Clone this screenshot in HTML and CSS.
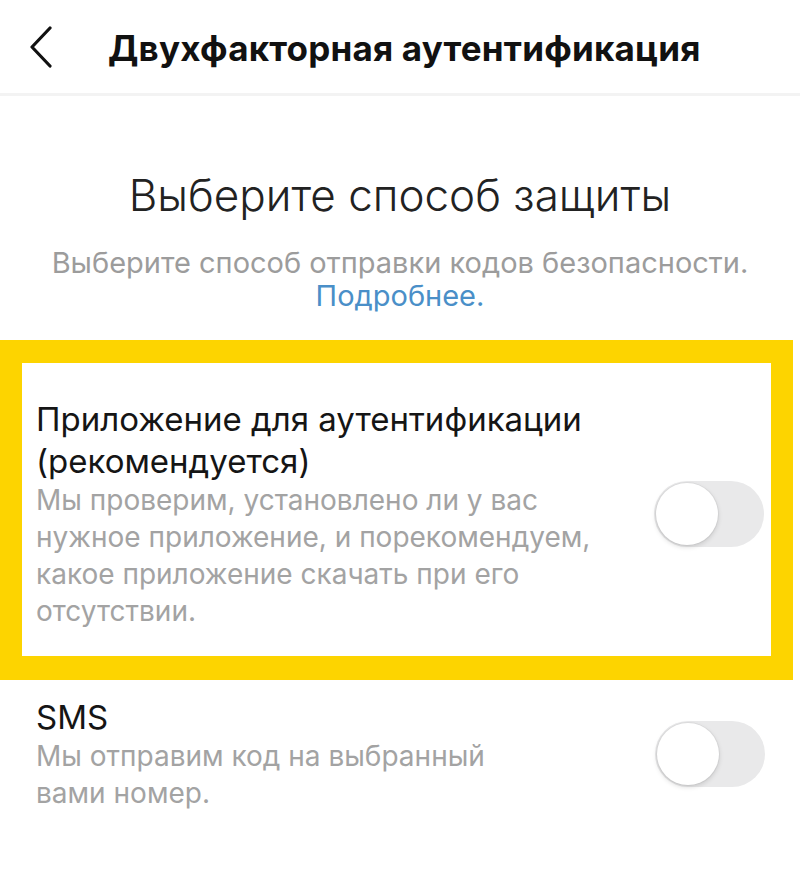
FILE: index.html
```html
<!DOCTYPE html>
<html lang="ru">
<head>
  <meta charset="UTF-8" />
  <meta name="viewport" content="width=device-width, initial-scale=1.0"/>
  <title>Двухфакторная аутентификация</title>
  <link rel="stylesheet" href="styles.css">
</head>
<body>

  <header class="topbar">
    <button class="back-btn" aria-label="Назад">
      <svg width="26" height="42" viewBox="0 0 26 42">
        <polyline points="22,2 4,21 22,40" fill="none" stroke="#111" stroke-width="3.2" stroke-linecap="round" stroke-linejoin="round"/>
      </svg>
    </button>
    <h1>Двухфакторная аутентификация</h1>
  </header>

  <main>
    <section class="intro">
      <h2>Выберите способ защиты</h2>
      <p>Выберите способ отправки кодов безопасности.<br><a href="#">Подробнее.</a></p>
    </section>

    <!-- выделенный вариант -->
    <div class="highlight">
      <div class="option">
        <div class="option-text">
          <h3>Приложение для аутентификации (рекомендуется)</h3>
          <p>Мы проверим, установлено ли у вас нужное приложение, и порекомендуем, какое приложение скачать при его отсутствии.</p>
        </div>
        <span class="toggle"><span class="knob"></span></span>
      </div>
    </div>

    <div class="option option-sms">
      <div class="option-text">
        <h3>SMS</h3>
        <p>Мы отправим код на выбранный вами номер.</p>
      </div>
      <span class="toggle"><span class="knob"></span></span>
    </div>
  </main>

</body>
</html>
```

FILE: styles.css
```css
body {
  margin: 0;
  font-family: Inter, 'Noto Sans', sans-serif;
  background: #fff;
  color: #111;
}

.topbar {
  height: 93px;
  display: flex;
  align-items: center;
  border-bottom: 3px solid #f3f3f3;
}

.back-btn {
  background: none;
  border: none;
  padding: 0;
  margin: 0 54px 0 28px;
  display: flex;
  cursor: pointer;
}

.topbar h1 {
  margin: 0;
  font-size: 35px;
  font-weight: 700;
  letter-spacing: 0.2px;
  color: #111;
  position: relative;
  top: 1px;
}

.intro {
  text-align: center;
  padding-top: 74px;
  height: 244px;
  box-sizing: border-box;
}

.intro h2 {
  margin: 0;
  font-size: 44px;
  font-weight: 300;
  color: #222;
  line-height: 50px;
}

.intro p {
  margin: 26px 0 0;
  font-size: 29px;
  line-height: 33px;
  color: #9c9c9c;
}

.intro a {
  color: #4a8fc8;
  text-decoration: none;
}

.highlight {
  width: 793px;
  height: 340px;
  box-sizing: border-box;
  border: 22px solid #fdd400;
  border-top-width: 23px;
  border-bottom-width: 24px;
}

.option {
  display: flex;
  align-items: center;
  justify-content: space-between;
  padding: 0 7px 0 14px;
}

.highlight .option {
  height: 100%;
  box-sizing: border-box;
  padding-top: 8px;
}

.option-text {
  width: 590px;
}

.option h3 {
  margin: 0;
  font-size: 33px;
  font-weight: 400;
  line-height: 42px;
  color: #151515;
}

.option p {
  margin: 0;
  font-size: 28px;
  line-height: 37px;
  color: #a3a3a3;
}

.option-sms {
  padding: 16px 35px 0 36px;
}

.option-sms .option-text {
  width: 480px;
}

.toggle {
  width: 110px;
  height: 66px;
  border-radius: 33px;
  background: #e9e9ea;
  display: flex;
  align-items: center;
  padding-left: 2px;
  box-sizing: border-box;
  flex-shrink: 0;
}

.knob {
  width: 62px;
  height: 62px;
  border-radius: 50%;
  background: #fff;
  box-shadow: 0 2px 5px rgba(0,0,0,0.15), 0 0 0 1px rgba(0,0,0,0.04);
}
```
